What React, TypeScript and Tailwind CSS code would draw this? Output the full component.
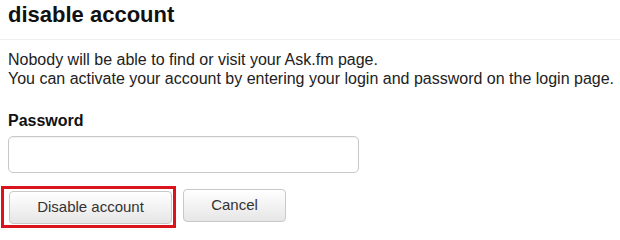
export default function App() {
  return (
    <div className="w-[620px] h-[235px] bg-white overflow-hidden font-['Liberation_Sans',Arial,sans-serif] text-[#222]">
      <h1 className="px-2 pt-[2px] h-[40px] text-[22px] leading-[26px] font-bold text-[#111] border-b border-[#eeeeee]">
        disable account
      </h1>
      <div className="px-2 pt-[10px] text-[16px] leading-[19px] text-[#222] whitespace-nowrap">
        <p>Nobody will be able to find or visit your Ask.fm page.</p>
        <p>You can activate your account by entering your login and password on the login page.</p>
      </div>
      <div className="px-2 pt-[24px]">
        <label className="block text-[16px] leading-[18px] font-bold text-[#111]">Password</label>
        <input
          type="password"
          className="mt-[6px] block w-[351px] h-[37px] rounded-[5px] border border-[#c8c8c8] bg-white shadow-[inset_0_1px_2px_rgba(0,0,0,0.06)]"
        />
      </div>
      <div className="flex items-start gap-[7px] pl-[1px] pt-[13px]">
        <div className="border-[3px] border-[#d9141c] pl-[5px] pr-[1px] pt-[2px] pb-[1px]">
          <button className="block w-[163px] h-[33px] rounded-[4px] border border-[#c9c9c9] bg-gradient-to-b from-white to-[#e6e6e6] text-[15px] text-[#333]">
            Disable account
          </button>
        </div>
        <button className="mt-[3px] w-[103px] h-[33px] rounded-[4px] border border-[#c9c9c9] bg-gradient-to-b from-white to-[#e6e6e6] text-[15px] text-[#333]">
          Cancel
        </button>
      </div>
    </div>
  );
}
